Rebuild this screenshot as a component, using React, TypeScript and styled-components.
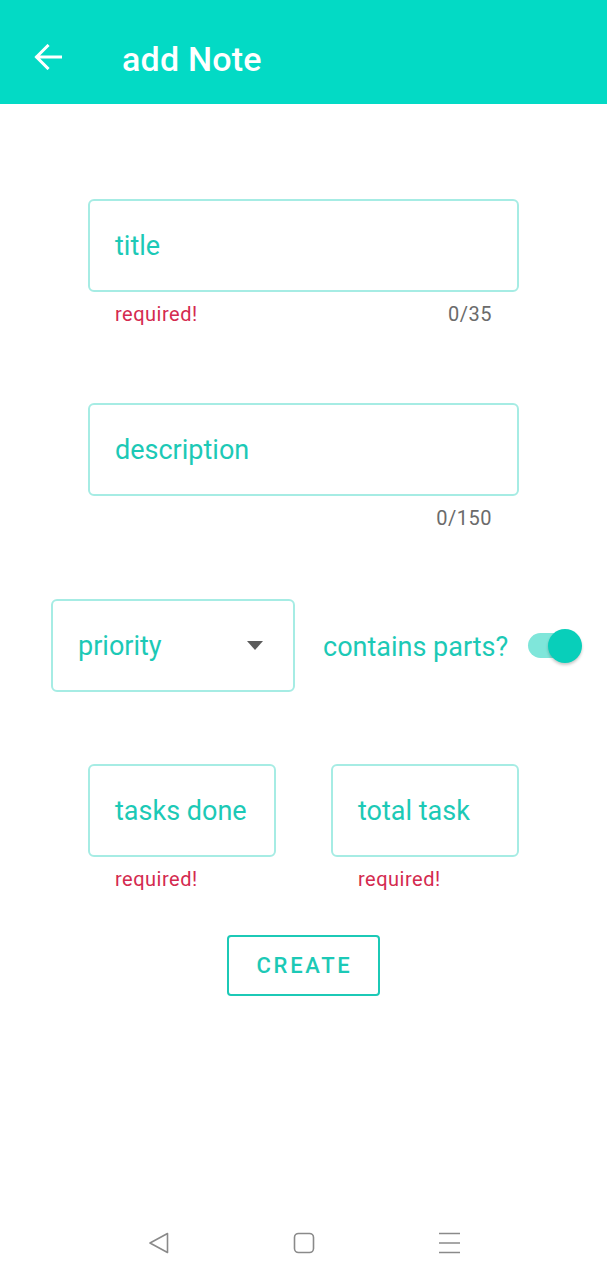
import React from 'react'
import styled, { createGlobalStyle } from 'styled-components'

const teal = '#03DAC5'
const hint = '#1CC9B6'
const outline = '#A6ECE4'
const errorRed = '#D42A4F'
const helperGray = '#6b6b6b'

const GlobalStyle = createGlobalStyle`
  html, body {
    margin: 0;
    padding: 0;
    background: #ffffff;
    font-family: Roboto, 'Noto Sans', sans-serif;
  }
`

const Screen = styled.div`
  width: 607px;
  height: 1280px;
  display: flex;
  flex-direction: column;
  background: #fff;
`

const AppBar = styled.header`
  height: 104px;
  box-sizing: border-box;
  background: ${teal};
  display: flex;
  align-items: flex-start;
  padding-top: 40px;
  color: #fff;
  flex-shrink: 0;
`

const BackButton = styled.div`
  width: 28px;
  height: 26px;
  margin-left: 34px;
  margin-top: 4px;
  display: flex;
`

const Title = styled.h1`
  margin: 0 0 0 60px;
  font-size: 34px;
  line-height: 38px;
  font-weight: 500;
  letter-spacing: 0.2px;
`

const Form = styled.main`
  flex: 1;
  display: flex;
  flex-direction: column;
  padding-top: 95px;
`

const Field = styled.div<{ $width?: number }>`
  display: flex;
  flex-direction: column;
  width: ${p => (p.$width ? `${p.$width}px` : '431px')};
`

const FullField = styled(Field)`
  margin: 0 88px;
`

const OutlinedBox = styled.div`
  height: 93px;
  box-sizing: border-box;
  border: 2px solid ${outline};
  border-radius: 6px;
  display: flex;
  align-items: center;
  padding: 0 25px;
  color: ${hint};
  font-size: 27px;
`

const SelectBox = styled(OutlinedBox)`
  width: 244px;
  justify-content: space-between;
  padding-right: 30px;
`

const Caret = styled.span`
  width: 0;
  height: 0;
  border-left: 8.5px solid transparent;
  border-right: 8.5px solid transparent;
  border-top: 9px solid #5c5c5c;
`

const Helper = styled.div`
  display: flex;
  justify-content: space-between;
  padding: 0 27px;
  height: 22px;
  margin-top: 11px;
  font-size: 20px;
  line-height: 22px;
  letter-spacing: 0.5px;
`

const ErrorText = styled.span`
  color: ${errorRed};
`

const Counter = styled.span`
  color: ${helperGray};
  margin-left: auto;
`

const Spacer = styled.div<{ $h: number }>`
  height: ${p => p.$h}px;
  flex-shrink: 0;
`

const OptionsRow = styled.div`
  display: flex;
  align-items: center;
  margin-left: 51px;
`

const SwitchLabel = styled.span`
  margin-left: 28px;
  color: ${hint};
  font-size: 27px;
  margin-top: 2px;
`

const Switch = styled.div`
  position: relative;
  width: 54px;
  height: 34px;
  margin-left: 20px;
  display: flex;
  align-items: center;
`

const Track = styled.div`
  width: 46px;
  height: 25px;
  border-radius: 13px;
  background: #7FE6DA;
`

const Thumb = styled.div`
  position: absolute;
  right: 0;
  top: 0;
  width: 34px;
  height: 34px;
  border-radius: 50%;
  background: #08CFBA;
  box-shadow: 0 2px 3px rgba(0, 0, 0, 0.22);
`

const TaskRow = styled.div`
  display: flex;
  gap: 55px;
  margin: 0 88px;
`

const CreateButton = styled.button`
  align-self: center;
  width: 153px;
  height: 61px;
  background: #fff;
  border: 2px solid ${hint};
  border-radius: 4px;
  color: ${hint};
  font-family: Roboto, sans-serif;
  font-size: 22px;
  font-weight: 500;
  letter-spacing: 2.7px;
  padding: 0 0 0 2px;
`

const NavBar = styled.nav`
  height: 74px;
  box-sizing: border-box;
  display: flex;
  justify-content: center;
  align-items: flex-start;
  gap: 123px;
  padding-top: 26px;
  flex-shrink: 0;
`

const NavIcon = styled.svg`
  width: 22px;
  height: 22px;
`

export default function App() {
  return (
    <Screen>
      <GlobalStyle />
      <AppBar>
        <BackButton>
          <svg width="28" height="26" viewBox="0 0 28 26" fill="none">
            <path d="M27 13H3M13.5 2L2.5 13L13.5 24" stroke="#fff" strokeWidth="3" strokeLinecap="square" />
          </svg>
        </BackButton>
        <Title>add Note</Title>
      </AppBar>

      <Form>
        <FullField>
          <OutlinedBox>title</OutlinedBox>
          <Helper>
            <ErrorText>required!</ErrorText>
            <Counter>0/35</Counter>
          </Helper>
        </FullField>

        <Spacer $h={78} />

        <FullField>
          <OutlinedBox>description</OutlinedBox>
          <Helper>
            <Counter>0/150</Counter>
          </Helper>
        </FullField>

        <Spacer $h={70} />

        <OptionsRow>
          <SelectBox>
            priority
            <Caret />
          </SelectBox>
          <SwitchLabel>contains parts?</SwitchLabel>
          <Switch>
            <Track />
            <Thumb />
          </Switch>
        </OptionsRow>

        <Spacer $h={72} />

        <TaskRow>
          <Field $width={188}>
            <OutlinedBox>tasks done</OutlinedBox>
            <Helper>
              <ErrorText>required!</ErrorText>
            </Helper>
          </Field>
          <Field $width={188}>
            <OutlinedBox>total task</OutlinedBox>
            <Helper>
              <ErrorText>required!</ErrorText>
            </Helper>
          </Field>
        </TaskRow>

        <Spacer $h={45} />

        <CreateButton>CREATE</CreateButton>
      </Form>

      <NavBar>
        <NavIcon viewBox="0 0 22 22" fill="none">
          <path d="M19.5 1.5L2 11L19.5 20.5Z" stroke="#8a8a8a" strokeWidth="1.6" strokeLinejoin="round" />
        </NavIcon>
        <NavIcon viewBox="0 0 22 22" fill="none">
          <rect x="1.5" y="1.5" width="19" height="19" rx="4" stroke="#8a8a8a" strokeWidth="1.6" />
        </NavIcon>
        <NavIcon viewBox="0 0 22 22" fill="none">
          <path d="M1 1.5H22M1 11H22M1 20.5H22" stroke="#8a8a8a" strokeWidth="1.6" />
        </NavIcon>
      </NavBar>
    </Screen>
  )
}
